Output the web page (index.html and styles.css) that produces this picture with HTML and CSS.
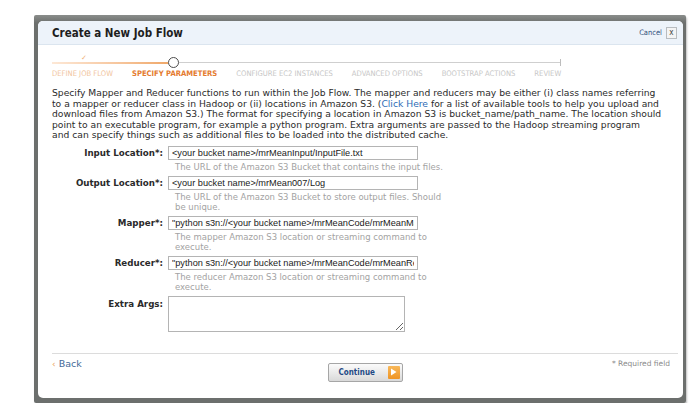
FILE: index.html
```html
<!DOCTYPE html>
<html>
<head>
<meta charset="utf-8">
<link rel="stylesheet" href="styles.css">
</head>
<body>
<div class="frame">
  <div class="panel">
    <div class="header">
      <h1 class="title">Create a New Job Flow</h1>
      <a class="cancel">Cancel <span class="xbox">x</span></a>
    </div>
    <div class="content">
      <div class="steps">
        <div class="track">
          <div class="seg-done"><span class="check">&#x2713;</span></div>
          <div class="dot"></div>
          <div class="seg-todo"></div>
          <div class="tick"></div>
        </div>
        <div class="step-labels">
          <span class="step done">DEFINE JOB FLOW</span>
          <span class="step current">SPECIFY PARAMETERS</span>
          <span class="step">CONFIGURE EC2 INSTANCES</span>
          <span class="step">ADVANCED OPTIONS</span>
          <span class="step">BOOTSTRAP ACTIONS</span>
          <span class="step">REVIEW</span>
        </div>
      </div>
      <p class="intro">Specify Mapper and Reducer functions to run within the Job Flow. The mapper and reducers may be either (i) class names referring<br>to a mapper or reducer class in Hadoop or (ii) locations in Amazon S3. (<a class="link">Click Here</a> for a list of available tools to help you upload and<br>download files from Amazon S3.) The format for specifying a location in Amazon S3 is bucket_name/path_name. The location should<br>point to an executable program, for example a python program. Extra arguments are passed to the Hadoop streaming program<br>and can specify things such as additional files to be loaded into the distributed cache.</p>
      <div class="form">
        <div class="row">
          <label class="lbl">Input Location*:</label>
          <div class="field">
            <input class="txt" type="text" value="&lt;your bucket name&gt;/mrMeanInput/InputFile.txt">
            <div class="help">The URL of the Amazon S3 Bucket that contains the input files.</div>
          </div>
        </div>
        <div class="row">
          <label class="lbl">Output Location*:</label>
          <div class="field">
            <input class="txt" type="text" value="&lt;your bucket name&gt;/mrMean007/Log">
            <div class="help">The URL of the Amazon S3 Bucket to store output files. Should<br>be unique.</div>
          </div>
        </div>
        <div class="row">
          <label class="lbl">Mapper*:</label>
          <div class="field">
            <input class="txt" type="text" value="&quot;python s3n://&lt;your bucket name&gt;/mrMeanCode/mrMeanMapper.py&quot;">
            <div class="help">The mapper Amazon S3 location or streaming command to<br>execute.</div>
          </div>
        </div>
        <div class="row">
          <label class="lbl">Reducer*:</label>
          <div class="field">
            <input class="txt" type="text" value="&quot;python s3n://&lt;your bucket name&gt;/mrMeanCode/mrMeanReducer.py&quot;">
            <div class="help">The reducer Amazon S3 location or streaming command to<br>execute.</div>
          </div>
        </div>
        <div class="row">
          <label class="lbl lbl-top">Extra Args:</label>
          <div class="field">
            <textarea class="area"></textarea>
          </div>
        </div>
      </div>
    </div>
    <div class="footer">
      <a class="back"><span class="back-arrow">&#x2039;</span> Back</a>
      <button class="continue" type="button">Continue <span class="go"><svg width="7" height="8" viewBox="0 0 7 8"><path d="M1 0.5 L6.5 4 L1 7.5 Z" fill="#fff"/></svg></span></button>
      <span class="required">* Required field</span>
    </div>
  </div>
</div>
</body>
</html>
```

FILE: styles.css
```css
html, body {
  margin: 0;
  padding: 0;
  background: #ffffff;
}
body {
  font-family: "DejaVu Sans", Verdana, sans-serif;
  color: #333333;
}
.frame {
  margin: 15px 0 0 34px;
  width: 652px;
  height: 388px;
  box-sizing: border-box;
  padding: 6px 3px 5px 4px;
  background: linear-gradient(#8a8d8b, #6c6f6d 8px, #6c6f6d);
  border-radius: 2px;
  box-shadow: 1px 2px 2px rgba(0,0,0,0.25);
}
.panel {
  background: #ffffff;
  height: 377px;
  border-radius: 5px;
  overflow: hidden;
  display: flex;
  flex-direction: column;
}
.header {
  height: 23px;
  border-bottom: 1px solid #dbe5ef;
  background: #edf3fa;
  display: flex;
  align-items: center;
  justify-content: space-between;
  padding: 0 6px 0 14px;
}
.title {
  margin: 0;
  font-family: "DejaVu Sans Condensed", "DejaVu Sans", sans-serif;
  font-stretch: condensed;
  font-size: 11.5px;
  font-weight: bold;
  color: #1e1e1e;
}
.cancel {
  display: flex;
  align-items: center;
  gap: 4px;
  font-family: "DejaVu Sans Condensed", "DejaVu Sans", sans-serif;
  font-size: 7.5px;
  color: #2f4f7a;
}
.xbox {
  display: inline-flex;
  align-items: center;
  justify-content: center;
  width: 9px;
  height: 10px;
  border: 1px solid #b8bcc0;
  background: #f4f4f4;
  font-size: 8px;
  line-height: 1;
  color: #444;
}
.content {
  padding: 0 13px 0 14px;
}
.steps {
  width: 509px;
}
.track {
  margin-top: 12px;
  height: 11px;
  display: flex;
  align-items: center;
}
.seg-done {
  position: relative;
  width: 116px;
  height: 2px;
  background: linear-gradient(90deg, #fde8d6, #f6c49a 60%, #efa86a);
}
.check {
  position: absolute;
  left: 29px;
  top: -8px;
  font-size: 7px;
  color: #f0b278;
}
.dot {
  width: 9px;
  height: 9px;
  border: 1px solid #4d4d4d;
  border-radius: 50%;
  background: #ffffff;
}
.seg-todo {
  flex: 1;
  height: 1px;
  background: #cfcfcf;
}
.tick {
  width: 1px;
  height: 7px;
  background: #bdbdbd;
}
.step-labels {
  margin-top: 1px;
  display: flex;
  gap: 19px;
  font-family: "DejaVu Sans Condensed", "DejaVu Sans", sans-serif;
  font-stretch: condensed;
  font-size: 7.6px;
  line-height: 9px;
  color: #c6c6c6;
  white-space: nowrap;
}
.step.done {
  color: #f1c49c;
}
.step.current {
  color: #e47a2e;
  font-weight: bold;
}
.intro {
  margin: 10px 0 0 0;
  font-size: 9.2px;
  line-height: 10.5px;
  color: #2b2b2b;
  white-space: nowrap;
}
.link {
  color: #2d6bb6;
}
.form {
  margin-top: 5px;
  display: flex;
  flex-direction: column;
  gap: 4px;
}
.row {
  display: flex;
  gap: 5px;
}
.lbl {
  width: 111px;
  flex: none;
  text-align: right;
  font-size: 8.7px;
  font-weight: bold;
  line-height: 14px;
  color: #2a2a2a;
  white-space: nowrap;
}
.lbl-top {
  line-height: 16px;
}
.field {
  display: flex;
  flex-direction: column;
}
.txt {
  width: 250px;
  height: 14px;
  box-sizing: border-box;
  margin: 0;
  padding: 0 3px;
  border: 1px solid #b4b4b4;
  font-family: "Liberation Sans", Arial, sans-serif;
  font-size: 9.2px;
  color: #1a1a1a;
  background: #ffffff;
  outline: none;
}
.help {
  margin: 2px 0 0 7px;
  font-size: 8.5px;
  line-height: 10px;
  color: #a3a3a3;
  white-space: nowrap;
}
.area {
  width: 237px;
  height: 36px;
  box-sizing: border-box;
  margin: 0;
  border: 1px solid #b4b4b4;
  background: #ffffff;
}
.footer {
  margin: 21px 5px 0 14px;
  border-top: 1px solid #dcdcdc;
  padding-top: 5px;
  display: grid;
  grid-template-columns: 1fr auto 1fr;
  align-items: start;
}
.back {
  font-size: 9.5px;
  color: #456a98;
  line-height: 10px;
}
.back-arrow {
  color: #eba25a;
  font-size: 9px;
}
.continue {
  display: flex;
  align-items: center;
  justify-content: space-between;
  width: 75px;
  height: 19px;
  box-sizing: border-box;
  margin: 4px 0 0 0;
  padding: 0 2px 0 10px;
  border: 1px solid #a6a6a6;
  border-radius: 2px;
  background: linear-gradient(#fbfbfb, #e9e9e9 55%, #d9d9d9);
  font-family: "DejaVu Sans Condensed", "DejaVu Sans", sans-serif;
  font-stretch: condensed;
  font-size: 8px;
  font-weight: bold;
  color: #1f4a85;
}
.go {
  display: flex;
  align-items: center;
  justify-content: center;
  width: 12px;
  height: 13px;
  background: linear-gradient(#f8b85a, #ef9525);
  border-radius: 1px;
}
.required {
  justify-self: end;
  padding-right: 8px;
  font-size: 7.5px;
  color: #8a8a8a;
  line-height: 10px;
}
```
